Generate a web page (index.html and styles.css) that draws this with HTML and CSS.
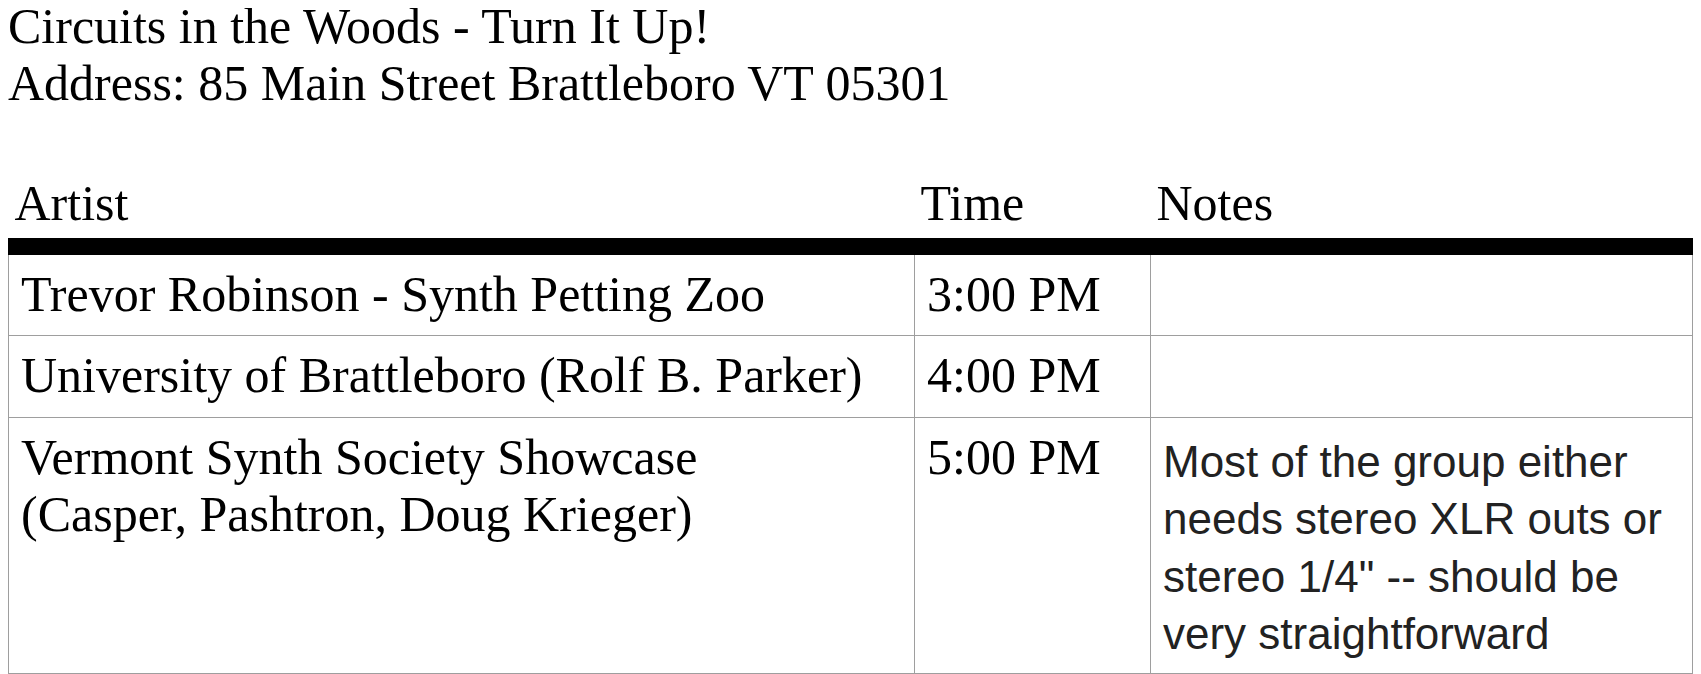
FILE: index.html
```html
<!DOCTYPE html>
<html>
<head>
<meta charset="utf-8">
<link rel="stylesheet" href="styles.css">
</head>
<body>
<div class="title">Circuits in the Woods - Turn It Up!<br>Address: 85 Main Street Brattleboro VT 05301</div>
<table class="schedule">
<colgroup><col class="c-artist"><col class="c-time"><col class="c-notes"></colgroup>
<thead>
<tr><th>Artist</th><th>Time</th><th>Notes</th></tr>
</thead>
<tbody>
<tr><td>Trevor Robinson - Synth Petting Zoo</td><td>3:00 PM</td><td></td></tr>
<tr><td>University of Brattleboro (Rolf B. Parker)</td><td>4:00 PM</td><td></td></tr>
<tr><td>Vermont Synth Society Showcase<br>(Casper, Pashtron, Doug Krieger)</td><td>5:00 PM</td><td class="notes-cell"><div class="note">Most of the group either needs stereo XLR outs or stereo 1/4" -- should be very straightforward</div></td></tr>
</tbody>
</table>
</body>
</html>
```
FILE: styles.css
```css
body {
  margin: 8px;
  font-family: "Liberation Serif", "Times New Roman", serif;
  font-size: 50px;
  color: #000;
  background: #fff;
}
.title {
  line-height: 56.6px;
  margin-top: -10px;
}
.schedule {
  width: 100%;
  border-collapse: collapse;
  table-layout: fixed;
  margin-top: 64px;
  line-height: 57.5px;
}
.c-artist { width: 906px; }
.c-time { width: 236px; }
.schedule th {
  font-weight: normal;
  text-align: left;
  padding: 0 6px 5px 6px;
  border-bottom: 17px solid #000;
}
.schedule td {
  vertical-align: top;
  padding: 11px 12px 12px 12px;
  border: 1px solid #9e9e9e;
}
.schedule td.notes-cell {
  padding-top: 15px;
  padding-bottom: 10px;
}
.note {
  font-family: "Liberation Sans", Arial, sans-serif;
  font-size: 44px;
  line-height: 57.5px;
  color: #222;
}
```
